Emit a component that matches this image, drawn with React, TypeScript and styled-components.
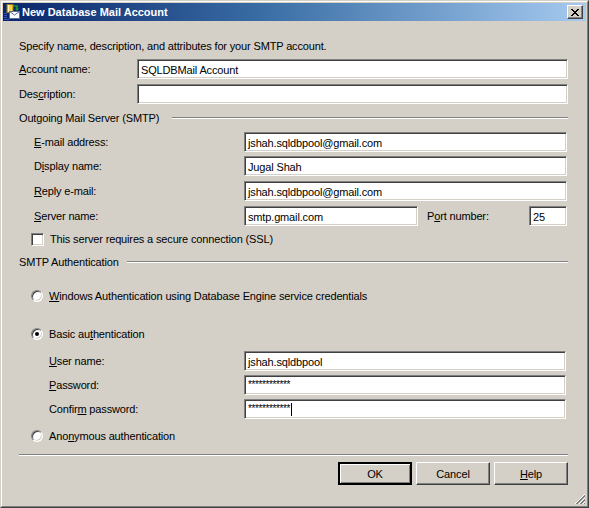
import styled, { createGlobalStyle, css } from 'styled-components';

const Global = createGlobalStyle`
  html, body {
    margin: 0;
    padding: 0;
    background: #d4d0c8;
  }
  body {
    font-family: "Liberation Sans", Arial, sans-serif;
    font-size: 11px;
    letter-spacing: -0.15px;
    color: #000;
  }
`;

// window frame (win2000 look)
const Window = styled.div`
  width: 589px;
  height: 508px;
  box-sizing: border-box;
  border: 1px solid;
  border-color: #d4d0c8 #404040 #404040 #d4d0c8;
  background: #d4d0c8;
`;

const Frame = styled.div`
  height: 100%;
  box-sizing: border-box;
  border: 1px solid;
  border-color: #ffffff #808080 #808080 #ffffff;
  padding: 1px;
  display: flex;
  flex-direction: column;
`;

const TitleBar = styled.div`
  height: 18px;
  flex: none;
  display: flex;
  align-items: center;
  padding: 0 3px 0 1px;
  background: linear-gradient(to right, #0a246a 0%, #3a6ea5 45%, #a6caf0 100%);
`;

const TitleText = styled.div`
  flex: 1;
  margin-left: 2px;
  color: #fff;
  font-weight: bold;
  font-size: 11px;
  letter-spacing: 0;
  white-space: nowrap;
`;

const raised = css`
  background: #d4d0c8;
  border: 1px solid;
  border-color: #ffffff #404040 #404040 #ffffff;
  box-shadow: inset -1px -1px #808080;
  box-sizing: border-box;
`;

const CloseBtn = styled.div`
  ${raised};
  width: 16px;
  height: 14px;
  display: flex;
  align-items: center;
  justify-content: center;
`;

const Content = styled.div`
  flex: 1;
  display: flex;
  flex-direction: column;
  padding: 0 18px 0 16px;
  position: relative;
`;

const Row = styled.div<{ $top: number; $indent?: number }>`
  display: flex;
  align-items: center;
  height: 20px;
  margin-top: ${(p) => p.$top}px;
  padding-left: ${(p) => p.$indent ?? 0}px;
  white-space: nowrap;
`;

const Label = styled.div<{ $w: number }>`
  width: ${(p) => p.$w}px;
  flex: none;
`;

const Field = styled.div<{ $w?: number; $mr?: number }>`
  ${(p) => (p.$w ? `width: ${p.$w}px; flex: none;` : 'flex: 1;')}
  margin-right: ${(p) => p.$mr ?? 0}px;
  height: 20px;
  box-sizing: border-box;
  background: #fff;
  border: 1px solid;
  border-color: #808080 #ffffff #ffffff #808080;
  box-shadow: inset 1px 1px #404040, inset -1px -1px #d4d0c8;
  padding: 1px 3px 0;
  display: flex;
  align-items: center;
  overflow: hidden;
`;

const Stars = styled.span`
  font-size: 10px;
  letter-spacing: -0.4px;
  line-height: 1;
  margin-top: -2px;
`;

const Caret = styled.span`
  display: inline-block;
  width: 1px;
  height: 13px;
  background: #000;
  margin-left: 1px;
`;

const Heading = styled.div`
  flex: 1;
  display: flex;
  align-items: center;
`;

const Rule = styled.div<{ $gap: number }>`
  flex: 1;
  margin-left: ${(p) => p.$gap}px;
  border-top: 1px solid #808080;
  border-bottom: 1px solid #ffffff;
`;

const CheckBox = styled.div`
  width: 13px;
  height: 13px;
  flex: none;
  box-sizing: border-box;
  background: #fff;
  border: 1px solid;
  border-color: #808080 #ffffff #ffffff #808080;
  box-shadow: inset 1px 1px #404040, inset -1px -1px #d4d0c8;
  margin-right: 6px;
`;

const Radio = styled.div<{ $on?: boolean }>`
  width: 12px;
  height: 12px;
  flex: none;
  box-sizing: border-box;
  border-radius: 50%;
  background: #fff;
  border: 1px solid;
  border-color: #808080 #ffffff #ffffff #808080;
  box-shadow: inset 1px 1px #404040, inset -1px -1px #d4d0c8;
  margin-right: 6px;
  display: flex;
  align-items: center;
  justify-content: center;
  &::after {
    content: '';
    width: 4px;
    height: 4px;
    border-radius: 50%;
    background: ${(p) => (p.$on ? '#000' : 'transparent')};
  }
`;

const Separator = styled.div`
  margin-top: 8px;
  border-top: 1px solid #808080;
  border-bottom: 1px solid #ffffff;
`;

const Buttons = styled.div`
  display: flex;
  justify-content: flex-end;
  gap: 4px;
  margin-top: 6px;
`;

const Button = styled.div<{ $def?: boolean }>`
  ${raised};
  width: 74px;
  height: 23px;
  padding-top: 1px;
  display: flex;
  align-items: center;
  justify-content: center;
  ${(p) =>
    p.$def &&
    css`
      border: 2px solid #000;
      box-shadow: inset 1px 1px #fff, inset -1px -1px #808080;
    `}
`;

const Grip = styled.div`
  position: absolute;
  right: 0;
  bottom: 0;
  width: 13px;
  height: 13px;
`;

const U = styled.span`
  text-decoration: underline;
  text-underline-offset: 1px;
`;

const TitleIcon = () => (
  <svg width="16" height="16" viewBox="0 0 16 16">
    <rect x="3" y="0.5" width="6" height="8" fill="#f5d64a" stroke="#9a7a10" />
    <rect x="4" y="1" width="1" height="7" fill="#fff6b0" />
    <path d="M9 2 h4 v3" stroke="#1d9a2a" strokeWidth="1.6" fill="none" />
    <path d="M11 4.5 L13 7 L15 4.5 Z" fill="#1d9a2a" />
    <rect x="5.5" y="7.5" width="10" height="7" fill="#fff" stroke="#5a6c9a" />
    <path d="M5.5 7.5 L10.5 11 L15.5 7.5" stroke="#5a6c9a" fill="none" />
    <rect x="0" y="9" width="3" height="1" fill="#3050c0" />
    <rect x="0" y="11" width="3" height="1" fill="#3050c0" />
    <rect x="0" y="13" width="3" height="1" fill="#3050c0" />
    <rect x="0" y="15" width="5" height="1" fill="#3050c0" />
  </svg>
);

const CloseX = () => (
  <svg width="8" height="7" viewBox="0 0 8 7">
    <path d="M0 0 L7 7 M1 0 L8 7 M7 0 L0 7 M8 0 L1 7" stroke="#000" strokeWidth="1" shapeRendering="crispEdges" />
  </svg>
);

const GripIcon = () => (
  <svg width="13" height="13" viewBox="0 0 13 13" shapeRendering="crispEdges">
    {[0, 4, 8].map((o) => (
      <g key={o}>
        <path d={`M${2 + o} 12 L12 ${2 + o}`} stroke="#fff" />
        <path d={`M${3 + o} 12 L12 ${3 + o}`} stroke="#808080" />
        <path d={`M${4 + o} 12 L12 ${4 + o}`} stroke="#808080" />
      </g>
    ))}
  </svg>
);

export default function App() {
  return (
    <>
      <Global />
      <Window>
        <Frame>
          <TitleBar>
            <TitleIcon />
            <TitleText>New Database Mail Account</TitleText>
            <CloseBtn>
              <CloseX />
            </CloseBtn>
          </TitleBar>
          <Content>
            <Row $top={15}>Specify name, description, and attributes for your SMTP account.</Row>

            <Row $top={3}>
              <Label $w={118}>
                <U>A</U>ccount name:
              </Label>
              <Field>SQLDBMail Account</Field>
            </Row>
            <Row $top={5}>
              <Label $w={118}>
                Des<U>c</U>ription:
              </Label>
              <Field />
            </Row>

            <Row $top={4}>
              <Heading>
                Outgoing Mail Server (SMTP)
                <Rule $gap={13} />
              </Heading>
            </Row>

            <Row $top={4} $indent={15}>
              <Label $w={210}>
                <U>E</U>-mail address:
              </Label>
              <Field $mr={1}>jshah.sqldbpool@gmail.com</Field>
            </Row>
            <Row $top={4} $indent={15}>
              <Label $w={210}>
                D<U>i</U>splay name:
              </Label>
              <Field $mr={1}>Jugal Shah</Field>
            </Row>
            <Row $top={5} $indent={15}>
              <Label $w={210}>
                <U>R</U>eply e-mail:
              </Label>
              <Field $mr={1}>jshah.sqldbpool@gmail.com</Field>
            </Row>
            <Row $top={5} $indent={15}>
              <Label $w={210}>
                <U>S</U>erver name:
              </Label>
              <Field $w={174}>smtp.gmail.com</Field>
              <Label $w={102} style={{ marginLeft: 9 }}>
                P<U>o</U>rt number:
              </Label>
              <Field $w={38}>25</Field>
            </Row>

            <Row $top={3} $indent={12}>
              <CheckBox />
              This server requires a secure connection (SSL)
            </Row>

            <Row $top={3}>
              <Heading>
                SMTP Authentication
                <Rule $gap={8} />
              </Heading>
            </Row>

            <Row $top={14} $indent={12}>
              <Radio />
              <span>
                <U>W</U>indows Authentication using Database Engine service credentials
              </span>
            </Row>

            <Row $top={18} $indent={12}>
              <Radio $on />
              <span>
                Basic au<U>t</U>hentication
              </span>
            </Row>

            <Row $top={7} $indent={30}>
              <Label $w={195}>
                <U>U</U>ser name:
              </Label>
              <Field $mr={2}>jshah.sqldbpool</Field>
            </Row>
            <Row $top={4} $indent={30}>
              <Label $w={195}>
                <U>P</U>assword:
              </Label>
              <Field $mr={2}>
                <Stars>************</Stars>
              </Field>
            </Row>
            <Row $top={4} $indent={30}>
              <Label $w={195}>
                Confir<U>m</U> password:
              </Label>
              <Field $mr={2}>
                <Stars>************</Stars>
                <Caret />
              </Field>
            </Row>

            <Row $top={7} $indent={12}>
              <Radio />
              <span>
                Ano<U>n</U>ymous authentication
              </span>
            </Row>

            <Separator />

            <Buttons>
              <Button $def>OK</Button>
              <Button>Cancel</Button>
              <Button>
                <span>
                  <U>H</U>elp
                </span>
              </Button>
            </Buttons>

            <Grip>
              <GripIcon />
            </Grip>
          </Content>
        </Frame>
      </Window>
    </>
  );
}
